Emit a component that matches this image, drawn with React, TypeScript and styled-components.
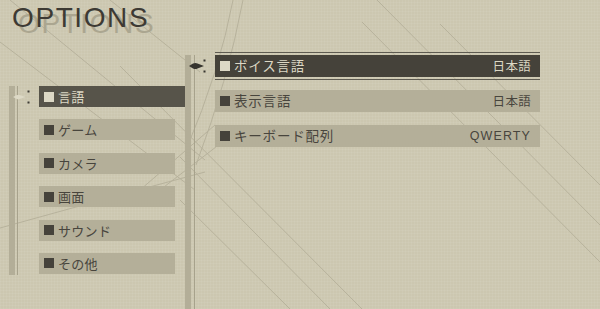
import React from "react";
import styled, { createGlobalStyle } from "styled-components";

const C = {
  bg: "#ccc7b0",
  bar: "#b4af99",
  ink: "#48453d",
  selLeft: "#57544a",
  selRight: "#45423a",
  light: "#dcd8c5",
  rail: "#b3ae98",
  line: "#a7a28c",
  deco: "#b7b29c",
  shadow: "#aba690",
};

const Global = createGlobalStyle`
  html, body { margin: 0; padding: 0; background: ${C.bg}; }
  #root { width: 600px; height: 309px; }
`;

const Screen = styled.div`
  position: relative;
  width: 600px;
  height: 309px;
  overflow: hidden;
  background-color: ${C.bg};
  background-image:
    repeating-linear-gradient(0deg, rgba(255,255,255,0.05) 0 1px, transparent 1px 3px),
    repeating-linear-gradient(90deg, rgba(255,255,255,0.05) 0 1px, transparent 1px 3px);
  font-family: "Noto Sans CJK JP", "Noto Sans", sans-serif;
  color: ${C.ink};
  display: flex;
  flex-direction: column;
`;

const Deco = styled.svg`
  position: absolute;
  inset: 0;
  z-index: 0;
  pointer-events: none;
`;

const Title = styled.h1`
  position: relative;
  z-index: 1;
  margin: 0;
  height: 52px;
  box-sizing: border-box;
  padding: 4px 0 0 12px;
  font-family: "Liberation Sans", Arial, sans-serif;
  font-weight: 400;
  font-size: 28px;
  line-height: 28px;
  letter-spacing: 1.6px;
  color: #3d3a34;
  text-shadow: 6px 6px 0 ${C.shadow};
`;

const Body = styled.div`
  position: relative;
  z-index: 1;
  flex: 1;
  display: flex;
  align-items: stretch;
`;

const LeftPane = styled.div`
  width: 185px;
  box-sizing: border-box;
  padding: 34px 0 0 9px;
  display: flex;
  align-items: flex-start;
`;

const Track = styled.div<{ $height: number }>`
  display: flex;
  gap: 2px;
  height: ${(p) => p.$height}px;
  flex-shrink: 0;
`;

const Rail = styled.div`
  width: 6px;
  background: ${C.rail};
`;

const RailLine = styled.div`
  width: 1px;
  background: ${C.line};
`;

const LeftList = styled.div`
  display: flex;
  flex-direction: column;
  gap: 12.4px;
`;

const Row = styled.div`
  display: flex;
  align-items: center;
`;

const CursorSlot = styled.div<{ $w: number }>`
  width: ${(p) => p.$w}px;
  flex-shrink: 0;
  display: flex;
  align-items: center;
`;

const CursorSvg = styled.svg<{ $shift: number }>`
  display: block;
  margin-left: ${(p) => p.$shift}px;
  flex-shrink: 0;
`;

const Item = styled.div<{ $selected?: boolean; $w: number; $h: number; $sel: string; $size: number; $ls: number }>`
  position: relative;
  width: ${(p) => p.$w}px;
  height: ${(p) => p.$h}px;
  box-sizing: border-box;
  padding: 0 9px 0 5px;
  display: flex;
  align-items: center;
  gap: 4px;
  background: ${(p) => (p.$selected ? p.$sel : C.bar)};
  color: ${(p) => (p.$selected ? C.light : C.ink)};
  font-size: ${(p) => p.$size}px;
  letter-spacing: ${(p) => p.$ls}px;
  white-space: nowrap;
`;

const Framed = styled(Item)`
  &::before,
  &::after {
    content: "";
    position: absolute;
    left: 0;
    right: 0;
    height: 1px;
    background: #5e5b51;
  }
  &::before { top: -3px; }
  &::after { bottom: -3px; }
`;

const Square = styled.span<{ $selected?: boolean }>`
  width: 10px;
  height: 10px;
  flex-shrink: 0;
  background: ${(p) => (p.$selected ? C.light : "#45423b")};
`;

const Label = styled.span`
  flex: 1;
  line-height: 1;
`;

const Value = styled.span<{ $latin?: boolean }>`
  line-height: 1;
  font-family: ${(p) => (p.$latin ? '"Liberation Sans", Arial, sans-serif' : '"Noto Sans CJK JP", sans-serif')};
  font-size: 12.5px;
  letter-spacing: ${(p) => (p.$latin ? "1.1px" : "0.3px")};
`;

const Divider = styled.div`
  display: flex;
  gap: 3px;
  margin-top: 3px;
  flex-shrink: 0;
`;

const RightPane = styled.div`
  padding-top: 3px;
  display: flex;
  flex-direction: column;
  gap: 13px;
`;

function Cursor({ dark, shift }: { dark?: boolean; shift: number }) {
  const fill = dark ? "#36342e" : "#ddd9c6";
  const dot = dark ? "#36342e" : "#3f3c35";
  return dark ? (
    <CursorSvg $shift={shift} width="18" height="14" viewBox="0 0 18 14">
      <path d="M0 7 L4 4.6 Q6.5 3.2 8.5 4.6 L15 7 L8.5 9.4 Q6.5 10.8 4 9.4 Z" fill={fill} />
      <rect x="14.5" y="0.5" width="2" height="2" fill={dot} />
      <rect x="14.5" y="11.5" width="2" height="2" fill={dot} />
    </CursorSvg>
  ) : (
    <CursorSvg $shift={shift} width="18" height="14" viewBox="0 0 18 14">
      <path d="M0 7 L3.5 5.2 Q5.5 4.2 7 5.2 L12.5 7 L7 8.8 Q5.5 9.8 3.5 8.8 Z" fill={fill} />
      <rect x="14.5" y="0.5" width="2" height="2" fill={dot} />
      <rect x="14.5" y="11.5" width="2" height="2" fill={dot} />
    </CursorSvg>
  );
}

const categories = ["言語", "ゲーム", "カメラ", "画面", "サウンド", "その他"];
const settings = [
  { label: "ボイス言語", value: "日本語" },
  { label: "表示言語", value: "日本語" },
  { label: "キーボード配列", value: "QWERTY", latin: true },
];

export default function App() {
  return (
    <>
      <Global />
      <Screen>
        <Deco width="600" height="309" viewBox="0 0 600 309">
          <g stroke={C.deco} strokeWidth="1" fill="none">
            <line x1="10" y1="0" x2="205" y2="160" />
            <line x1="0" y1="42" x2="195" y2="190" />
            <line x1="110" y1="0" x2="200" y2="72" />
            <line x1="140" y1="190" x2="215" y2="125" />
            <line x1="160" y1="190" x2="225" y2="140" />
            <line x1="120" y1="66" x2="362" y2="309" />
            <line x1="180" y1="157" x2="330" y2="309" />
            <line x1="180" y1="200" x2="290" y2="309" />
            <line x1="377" y1="0" x2="600" y2="225" />
            <line x1="440" y1="24" x2="600" y2="185" />
            <line x1="362" y1="22" x2="600" y2="262" />
            <path d="M243 0 Q228 80 196 165" />
            <path d="M233 0 Q220 70 186 150" />
            <path d="M0 228 Q100 200 205 172" />
          </g>
        </Deco>
        <Title>OPTIONS</Title>
        <Body>
          <LeftPane>
            <Track $height={189}>
              <Rail />
              <RailLine />
            </Track>
            <LeftList>
              {categories.map((c, i) => (
                <Row key={c}>
                  <CursorSlot $w={21}>{i === 0 && <Cursor shift={-5} />}</CursorSlot>
                  <Item $selected={i === 0} $sel={C.selLeft} $w={i === 0 ? 146 : 136} $h={21} $size={13} $ls={0.3}>
                    <Square $selected={i === 0} />
                    <Label>{c}</Label>
                  </Item>
                </Row>
              ))}
            </LeftList>
          </LeftPane>
          <Divider>
            <Rail />
            <RailLine />
          </Divider>
          <RightPane>
            {settings.map((s, i) => {
              const Box = i === 0 ? Framed : Item;
              return (
                <Row key={s.label}>
                  <CursorSlot $w={20}>{i === 0 && <Cursor dark shift={-6} />}</CursorSlot>
                  <Box $selected={i === 0} $sel={C.selRight} $w={325} $h={22} $size={13.5} $ls={0.8}>
                    <Square $selected={i === 0} />
                    <Label>{s.label}</Label>
                    <Value $latin={s.latin}>{s.value}</Value>
                  </Box>
                </Row>
              );
            })}
          </RightPane>
        </Body>
      </Screen>
    </>
  );
}
